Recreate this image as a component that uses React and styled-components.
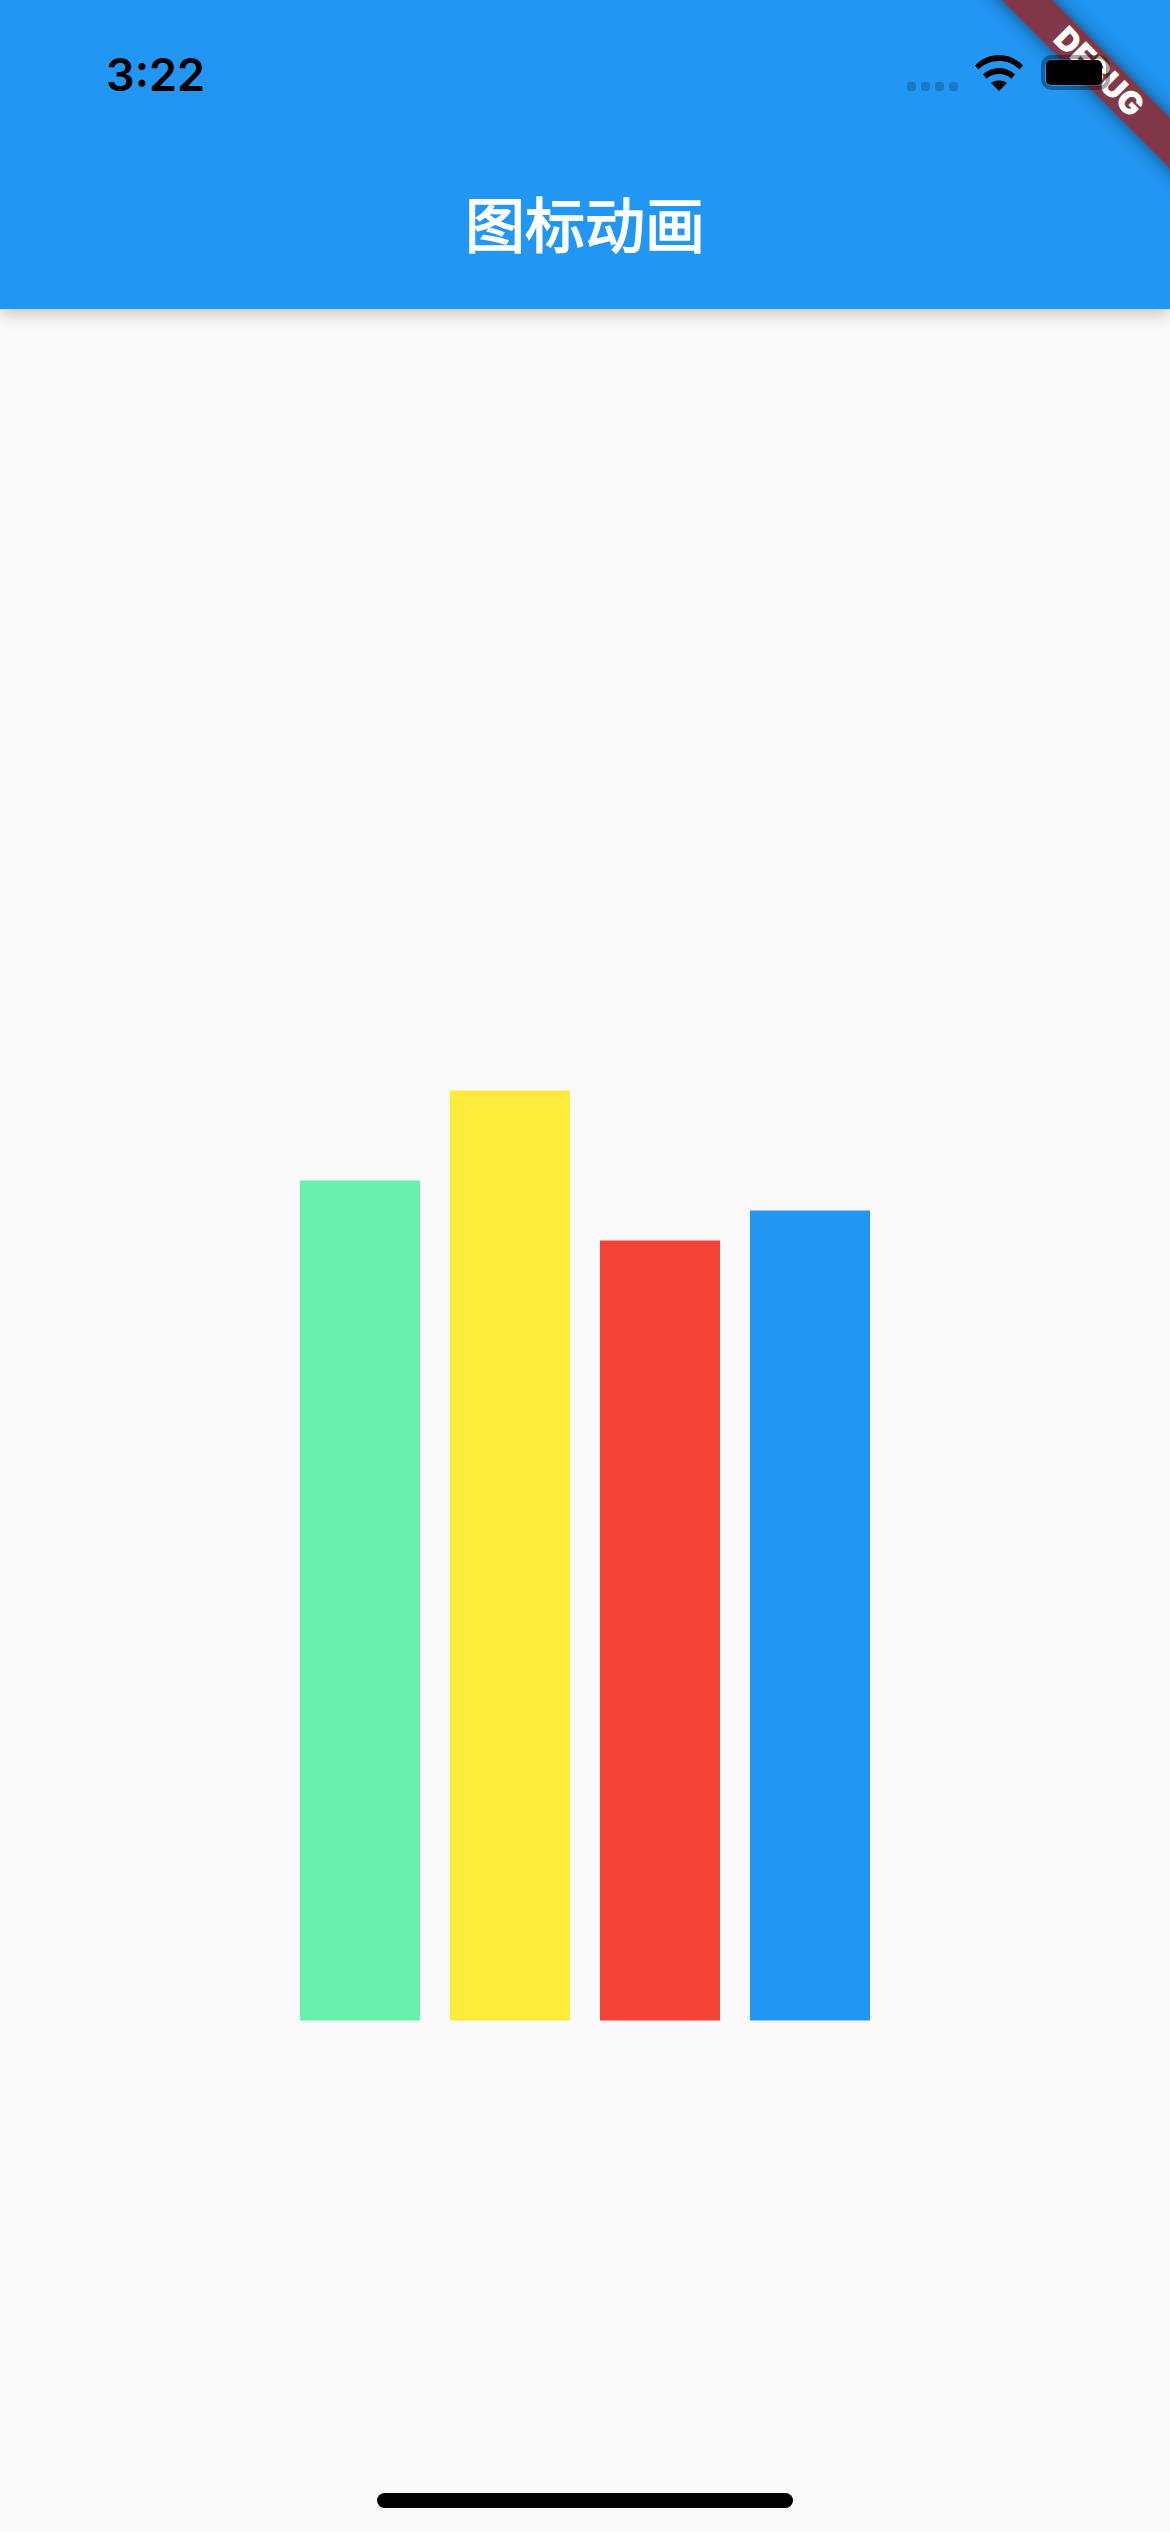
import React from 'react';
import styled, { createGlobalStyle } from 'styled-components';

const GlobalStyle = createGlobalStyle`
  html, body {
    margin: 0;
    padding: 0;
    background: #fafafa;
  }
`;

const Page = styled.div`
  position: relative;
  width: 1170px;
  height: 2532px;
  display: flex;
  flex-direction: column;
  overflow: hidden;
  background: #fafafa;
`;

const Header = styled.header`
  position: relative;
  height: 309px;
  flex: none;
  display: flex;
  flex-direction: column;
  background: #2196f3;
  box-shadow: 0 6px 15px rgba(0, 0, 0, 0.2);
`;

const StatusBar = styled.div`
  height: 141px;
  flex: none;
  display: flex;
  align-items: flex-start;
  justify-content: space-between;
  box-sizing: border-box;
  padding: 48px 60px 0 106px;
`;

const Time = styled.span`
  font: 600 45px/54px Inter, 'Liberation Sans', sans-serif;
  color: #000;
`;

const StatusIcons = styled.div`
  position: relative;
  z-index: 3;
  display: flex;
  align-items: flex-start;
  padding-top: 7px;
`;

const Signal = styled.div`
  display: flex;
  gap: 5px;
  margin: 27px 17px 0 0;
`;

const SignalDot = styled.i`
  width: 9px;
  height: 9px;
  border-radius: 3px;
  background: #1a78c8;
`;

const Wifi = styled.svg`
  width: 48px;
  height: 36px;
  margin-right: 18px;
`;

const Battery = styled.div`
  width: 69px;
  height: 35px;
  box-sizing: border-box;
  padding: 1px;
  border: 4px solid rgba(0, 0, 0, 0.35);
  border-radius: 11px;
`;

const BatteryLevel = styled.div`
  width: 56px;
  height: 25px;
  border-radius: 5px;
  background: #000;
`;

const Toolbar = styled.div`
  height: 168px;
  flex: none;
  display: flex;
  align-items: center;
  justify-content: center;
  padding-bottom: 6px;
  box-sizing: border-box;
`;

const Title = styled.h1`
  margin: 0;
  font: 400 60px/84px 'Noto Sans CJK SC', 'Noto Sans', sans-serif;
  -webkit-text-stroke: 1.6px #fff;
  color: #fff;
`;

const Main = styled.main`
  flex: 1;
  display: flex;
  align-items: flex-end;
  justify-content: center;
  gap: 30px;
  padding-bottom: 512px;
`;

const Bar = styled.div`
  width: 120px;
  height: ${p => p.$height}px;
  background: ${p => p.$color};
  box-shadow: 0 -1px 0 ${p => p.$edge}, 0 1px 0 ${p => p.$edge};
`;

const HomeIndicator = styled.div`
  position: absolute;
  left: 377px;
  bottom: 24px;
  width: 416px;
  height: 15px;
  border-radius: 8px;
  background: #000;
`;

const Banner = styled.div`
  position: absolute;
  z-index: 2;
  top: 53.5px;
  left: 948.5px;
  width: 300px;
  height: 36px;
  transform: rotate(45deg);
  background: rgba(162, 25, 18, 0.75);
  box-shadow: 0 0 18px rgba(0, 0, 0, 0.5);
  text-align: center;
  font: 900 32px/36px Inter, 'Liberation Sans', sans-serif;
  color: #fff;
`;

const bars = [
  { height: 839, color: '#69f0ae', edge: 'rgba(105, 240, 174, 0.5)' },
  { height: 929, color: '#ffeb3b', edge: 'rgba(255, 235, 59, 0.5)' },
  { height: 779, color: '#f44336', edge: 'rgba(244, 67, 54, 0.5)' },
  { height: 809, color: '#2196f3', edge: 'rgba(33, 150, 243, 0.5)' }
];

export default function App() {
  return (
    <Page>
      <GlobalStyle />
      <Header>
        <StatusBar>
          <Time>3:22</Time>
          <StatusIcons>
            <Signal>
              <SignalDot />
              <SignalDot />
              <SignalDot />
              <SignalDot />
            </Signal>
            <Wifi viewBox="0 0 48 36">
              <path d="M0 10.5C6 4 15 0 24 0C33 0 42 4 48 10.5L44.5 14.5C39 9 32 6 24 6C16 6 9 9 3.5 14.5Z" />
              <path d="M8 19.5C12 15.5 18 13 24 13C30 13 36 15.5 40 19.5L36.3 23.7C33 20.5 28.7 19 24 19C19.3 19 15 20.5 11.7 23.7Z" />
              <path d="M16 28C18 26.3 21 25.5 24 25.5C27 25.5 30 26.3 32 28L24 36Z" />
            </Wifi>
            <Battery>
              <BatteryLevel />
            </Battery>
          </StatusIcons>
        </StatusBar>
        <Toolbar>
          <Title>图标动画</Title>
        </Toolbar>
      </Header>
      <Main>
        {bars.map(bar => (
          <Bar key={bar.color} $height={bar.height} $color={bar.color} $edge={bar.edge} />
        ))}
      </Main>
      <HomeIndicator />
      <Banner>DEBUG</Banner>
    </Page>
  );
}
